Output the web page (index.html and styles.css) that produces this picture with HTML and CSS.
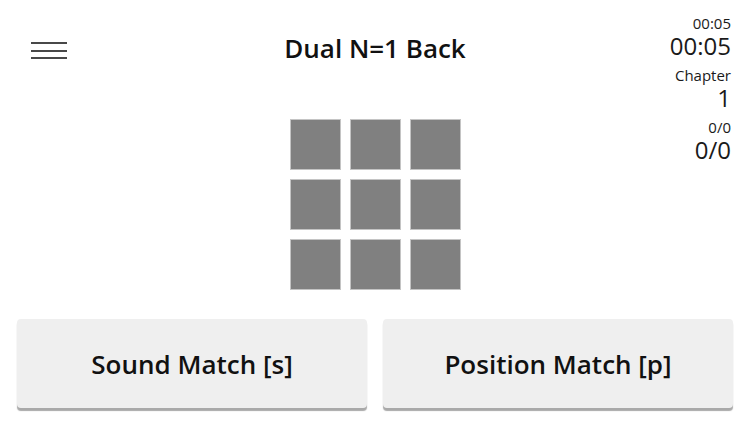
FILE: index.html
```html
<!DOCTYPE html>
<html lang="en">
<head>
<meta charset="utf-8">
<title>Dual N=1 Back</title>
<link rel="stylesheet" href="styles.css">
</head>
<body>
<div class="app">
  <div class="top">
    <div class="left">
      <button class="menu" aria-label="Menu">
        <span class="bar"></span>
        <span class="bar"></span>
        <span class="bar"></span>
      </button>
    </div>
    <div class="center">
      <h1 class="title">Dual N=1 Back</h1>
      <div class="board">
        <div class="cell"></div><div class="cell"></div><div class="cell"></div>
        <div class="cell"></div><div class="cell"></div><div class="cell"></div>
        <div class="cell"></div><div class="cell"></div><div class="cell"></div>
      </div>
    </div>
    <div class="right">
      <div class="stat">
        <div class="stat-label">00:05</div>
        <div class="stat-value">00:05</div>
      </div>
      <div class="stat">
        <div class="stat-label">Chapter</div>
        <div class="stat-value">1</div>
      </div>
      <div class="stat">
        <div class="stat-label">0/0</div>
        <div class="stat-value">0/0</div>
      </div>
    </div>
  </div>
  <div class="actions">
    <button class="match">Sound Match [s]</button>
    <button class="match">Position Match [p]</button>
  </div>
</div>
</body>
</html>
```
FILE: styles.css
```css
html, body {
  margin: 0;
  padding: 0;
  background: #ffffff;
}
body {
  font-family: "Open Sans", "Noto Sans", sans-serif;
  color: #111111;
  width: 750px;
  height: 422px;
  overflow: hidden;
}
.app {
  display: flex;
  flex-direction: column;
  height: 422px;
}
.top {
  display: grid;
  grid-template-columns: 1fr auto 1fr;
  height: 319px;
}
.left {
  padding-left: 31px;
  padding-top: 42px;
}
.menu {
  display: flex;
  flex-direction: column;
  gap: 5.5px;
  width: 36px;
  padding: 0;
  margin: 0;
  border: 0;
  background: transparent;
}
.bar {
  display: block;
  height: 2px;
  width: 36px;
  background: #484848;
}
.center {
  display: flex;
  flex-direction: column;
  align-items: center;
  padding-top: 30px;
}
.title {
  margin: 0;
  font-size: 26px;
  line-height: 36px;
  font-weight: 600;
  color: #111111;
}
.board {
  margin-top: 53px;
  display: grid;
  grid-template-columns: repeat(3, 51px);
  grid-template-rows: repeat(3, 51px);
  gap: 9px;
}
.cell {
  background: #808080;
  border: 1px solid #c4c4c4;
  box-sizing: border-box;
}
.right {
  display: flex;
  flex-direction: column;
  align-items: flex-end;
  padding-right: 19px;
  padding-top: 14px;
  gap: 7px;
  text-align: right;
  color: #1a1a1a;
}
.stat-label {
  font-size: 15px;
  line-height: 19px;
}
.stat-value {
  font-size: 24px;
  line-height: 26px;
}
.actions {
  display: flex;
  gap: 16px;
  padding: 0 17px;
}
.match {
  flex: 1;
  height: 89px;
  margin: 0;
  border: 0;
  border-radius: 4px;
  background: #efefef;
  box-shadow: 0 3px 1px #a9a9a9;
  font-family: "Open Sans", "Noto Sans", sans-serif;
  font-size: 26px;
  font-weight: 600;
  color: #111111;
  padding: 0;
}
```
